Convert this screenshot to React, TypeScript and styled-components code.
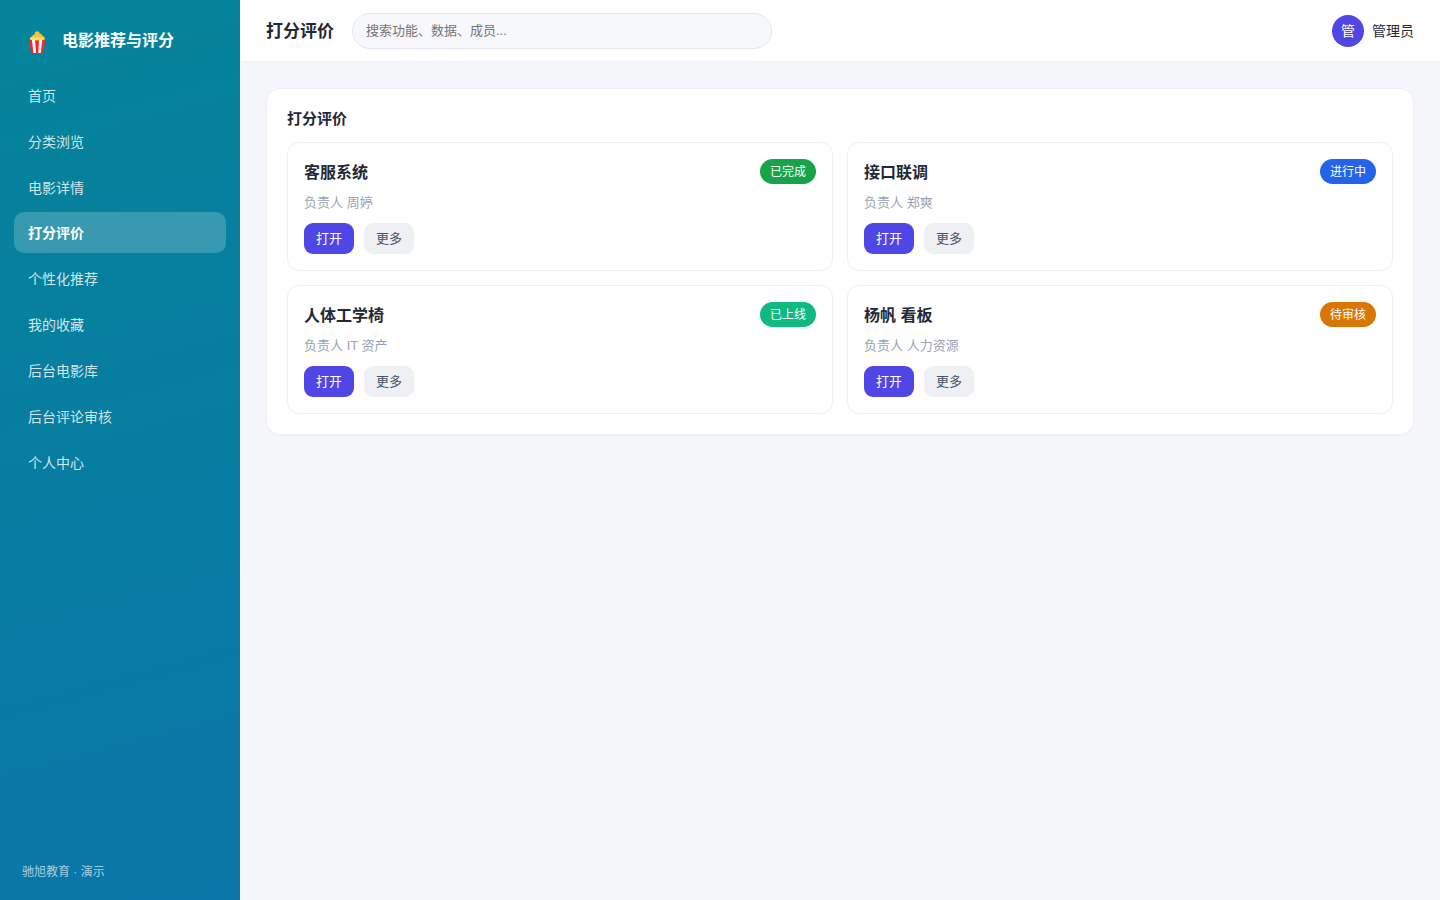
import React from "react";
import styled, { createGlobalStyle } from "styled-components";

const GlobalStyle = createGlobalStyle`
  *, *::before, *::after { box-sizing: border-box; }
  body {
    margin: 0;
    background: #f5f7fb;
    color: #1f2937;
    font-family: "Liberation Sans", "Noto Sans CJK SC", sans-serif;
    font-size: 14px;
    line-height: 20px;
  }
  button, input { font-family: inherit; }
`;

const Shell = styled.div`
  display: flex;
  min-height: 100vh;
`;

const Sidebar = styled.aside`
  display: flex;
  flex-direction: column;
  flex: 0 0 240px;
  padding: 22px 14px 18px;
  background: linear-gradient(165deg, #058499 0%, #0a76a9 100%);
  color: #fff;
`;

const Brand = styled.div`
  display: flex;
  align-items: center;
  gap: 14px;
  height: 38px;
  margin-bottom: 14px;
  padding: 0 14px;
  font-size: 16px;
  font-weight: 700;
`;

const Nav = styled.nav`
  display: flex;
  flex-direction: column;
  flex: 1;
  gap: 4px;
`;

const NavLink = styled.a<{ $active: boolean }>`
  padding: 11px 14px 9px;
  border-radius: 10px;
  font-size: 14px;
  line-height: ${(p) => (p.$active ? "21px" : "22px")};
  font-weight: ${(p) => (p.$active ? 700 : 400)};
  color: ${(p) => (p.$active ? "#fff" : "rgba(255, 255, 255, 0.82)")};
  background: ${(p) => (p.$active ? "rgba(255, 255, 255, 0.2)" : "transparent")};
  text-decoration: none;
`;

const SideFooter = styled.footer`
  padding: 0 8px;
  font-size: 12px;
  color: rgba(255, 255, 255, 0.65);
`;

const Main = styled.div`
  display: flex;
  flex-direction: column;
  flex: 1;
  min-width: 0;
`;

const TopBar = styled.header`
  display: flex;
  align-items: center;
  gap: 18px;
  height: 62px;
  padding: 0 26px;
  background: #fff;
  border-bottom: 1px solid #eef0f4;
`;

const PageTitle = styled.h1`
  margin: 0;
  padding-top: 2px;
  font-size: 17px;
  line-height: 24px;
  font-weight: 700;
`;

const SearchBox = styled.input`
  flex: 0 1 420px;
  min-width: 0;
  height: 36px;
  padding: 0 13px;
  border: 1px solid #e2e6ee;
  border-radius: 18px;
  background: #f7f8fc;
  font-size: 13px;
  color: #1f2937;
  outline: none;
  &::placeholder { color: #757575; opacity: 1; }
`;

const User = styled.div`
  display: flex;
  align-items: center;
  gap: 8px;
  margin-left: auto;
`;

const Avatar = styled.span`
  display: grid;
  place-items: center;
  width: 32px;
  height: 32px;
  border-radius: 50%;
  background: #4f46e5;
  color: #fff;
`;

const Content = styled.main`
  padding: 26px;
`;

const Panel = styled.section`
  padding: 20px;
  border: 1px solid #eff1f5;
  border-radius: 14px;
  background: #fff;
  box-shadow: 0 1px 3px rgba(16, 24, 40, 0.04);
`;

const PanelTitle = styled.h2`
  margin: 0 0 14px;
  font-size: 15px;
  line-height: 19px;
  font-weight: 700;
`;

const CardGrid = styled.div`
  display: grid;
  grid-template-columns: repeat(2, minmax(0, 1fr));
  gap: 14px;
`;

const Card = styled.article`
  padding: 16px;
  border: 1px solid #eef0f3;
  border-radius: 12px;
`;

const CardHead = styled.div`
  display: flex;
  align-items: center;
  justify-content: space-between;
`;

const CardTitle = styled.h3`
  margin: 0;
  padding-top: 2px;
  font-size: 16px;
  line-height: 23px;
  font-weight: 700;
`;

const Tag = styled.span<{ $color: string }>`
  padding: 1px 10px 0;
  border-radius: 13px;
  background: ${(p) => p.$color};
  color: #fff;
  font-size: 12px;
  line-height: 24px;
`;

const Meta = styled.p`
  margin: 9px 0 11px;
  font-size: 13px;
  line-height: 19px;
  color: #98a2b3;
`;

const Actions = styled.div`
  display: flex;
  gap: 10px;
`;

const Button = styled.button<{ $primary?: boolean }>`
  padding: 0 12px;
  border: 0;
  border-radius: 9px;
  background: ${(p) => (p.$primary ? "#4f46e5" : "#eef0f4")};
  color: ${(p) => (p.$primary ? "#fff" : "#475467")};
  font-size: 13px;
  line-height: 31px;
  cursor: pointer;
`;

const navItems = [
  "首页",
  "分类浏览",
  "电影详情",
  "打分评价",
  "个性化推荐",
  "我的收藏",
  "后台电影库",
  "后台评论审核",
  "个人中心",
];

const cards = [
  { title: "客服系统", owner: "周婷", status: "已完成", color: "#16a34a" },
  { title: "接口联调", owner: "郑爽", status: "进行中", color: "#2563eb" },
  { title: "人体工学椅", owner: "IT 资产", status: "已上线", color: "#10b981" },
  { title: "杨帆 看板", owner: "人力资源", status: "待审核", color: "#d97706" },
];

const Popcorn = () => (
  <svg width="20" height="24" viewBox="0 0 20 24" aria-hidden="true">
    <path d="M1 10.5 3 23Q3.1 24 4 24H14Q15 24 15.2 23L17.4 10.5Z" fill="#f5262b" />
    <path d="M3.8 10H7L8 24H5.4ZM11 10H14.4L12.8 24H10.3Z" fill="#f7f7f7" />
    <path d="M2 10.5Q1.4 8 4 7.5Q4.4 5.4 6.6 5.5Q6.8 2.2 9.4 2.2Q11.6 2.4 11.8 4.5Q14 4.5 14 6.6Q17 7.4 16.6 10.5Q9 12 2 10.5Z" fill="#fdc332" />
    <path d="M2 10.4Q2.2 8.4 4.4 8.6Q5.8 7.6 7.3 8.8Q9 7.6 10.4 8.8Q12 7.6 13.4 8.6Q16.2 8.2 16.6 10.4Q9 12 2 10.4Z" fill="#fee46a" />
  </svg>
);

export default function App() {
  return (
    <>
      <GlobalStyle />
      <Shell>
        <Sidebar>
          <Brand>
            <Popcorn />
            <span>电影推荐与评分</span>
          </Brand>
          <Nav>
            {navItems.map((item) => (
              <NavLink
                key={item}
                href="#"
                $active={item === "打分评价"}
                aria-current={item === "打分评价" ? "page" : undefined}
              >
                {item}
              </NavLink>
            ))}
          </Nav>
          <SideFooter>驰旭教育 · 演示</SideFooter>
        </Sidebar>
        <Main>
          <TopBar>
            <PageTitle>打分评价</PageTitle>
            <SearchBox type="search" aria-label="搜索" placeholder="搜索功能、数据、成员..." />
            <User>
              <Avatar aria-hidden="true">管</Avatar>
              <span>管理员</span>
            </User>
          </TopBar>
          <Content>
            <Panel>
              <PanelTitle>打分评价</PanelTitle>
              <CardGrid>
                {cards.map((card) => (
                  <Card key={card.title}>
                    <CardHead>
                      <CardTitle>{card.title}</CardTitle>
                      <Tag $color={card.color}>{card.status}</Tag>
                    </CardHead>
                    <Meta>负责人 {card.owner}</Meta>
                    <Actions>
                      <Button type="button" $primary>打开</Button>
                      <Button type="button">更多</Button>
                    </Actions>
                  </Card>
                ))}
              </CardGrid>
            </Panel>
          </Content>
        </Main>
      </Shell>
    </>
  );
}
